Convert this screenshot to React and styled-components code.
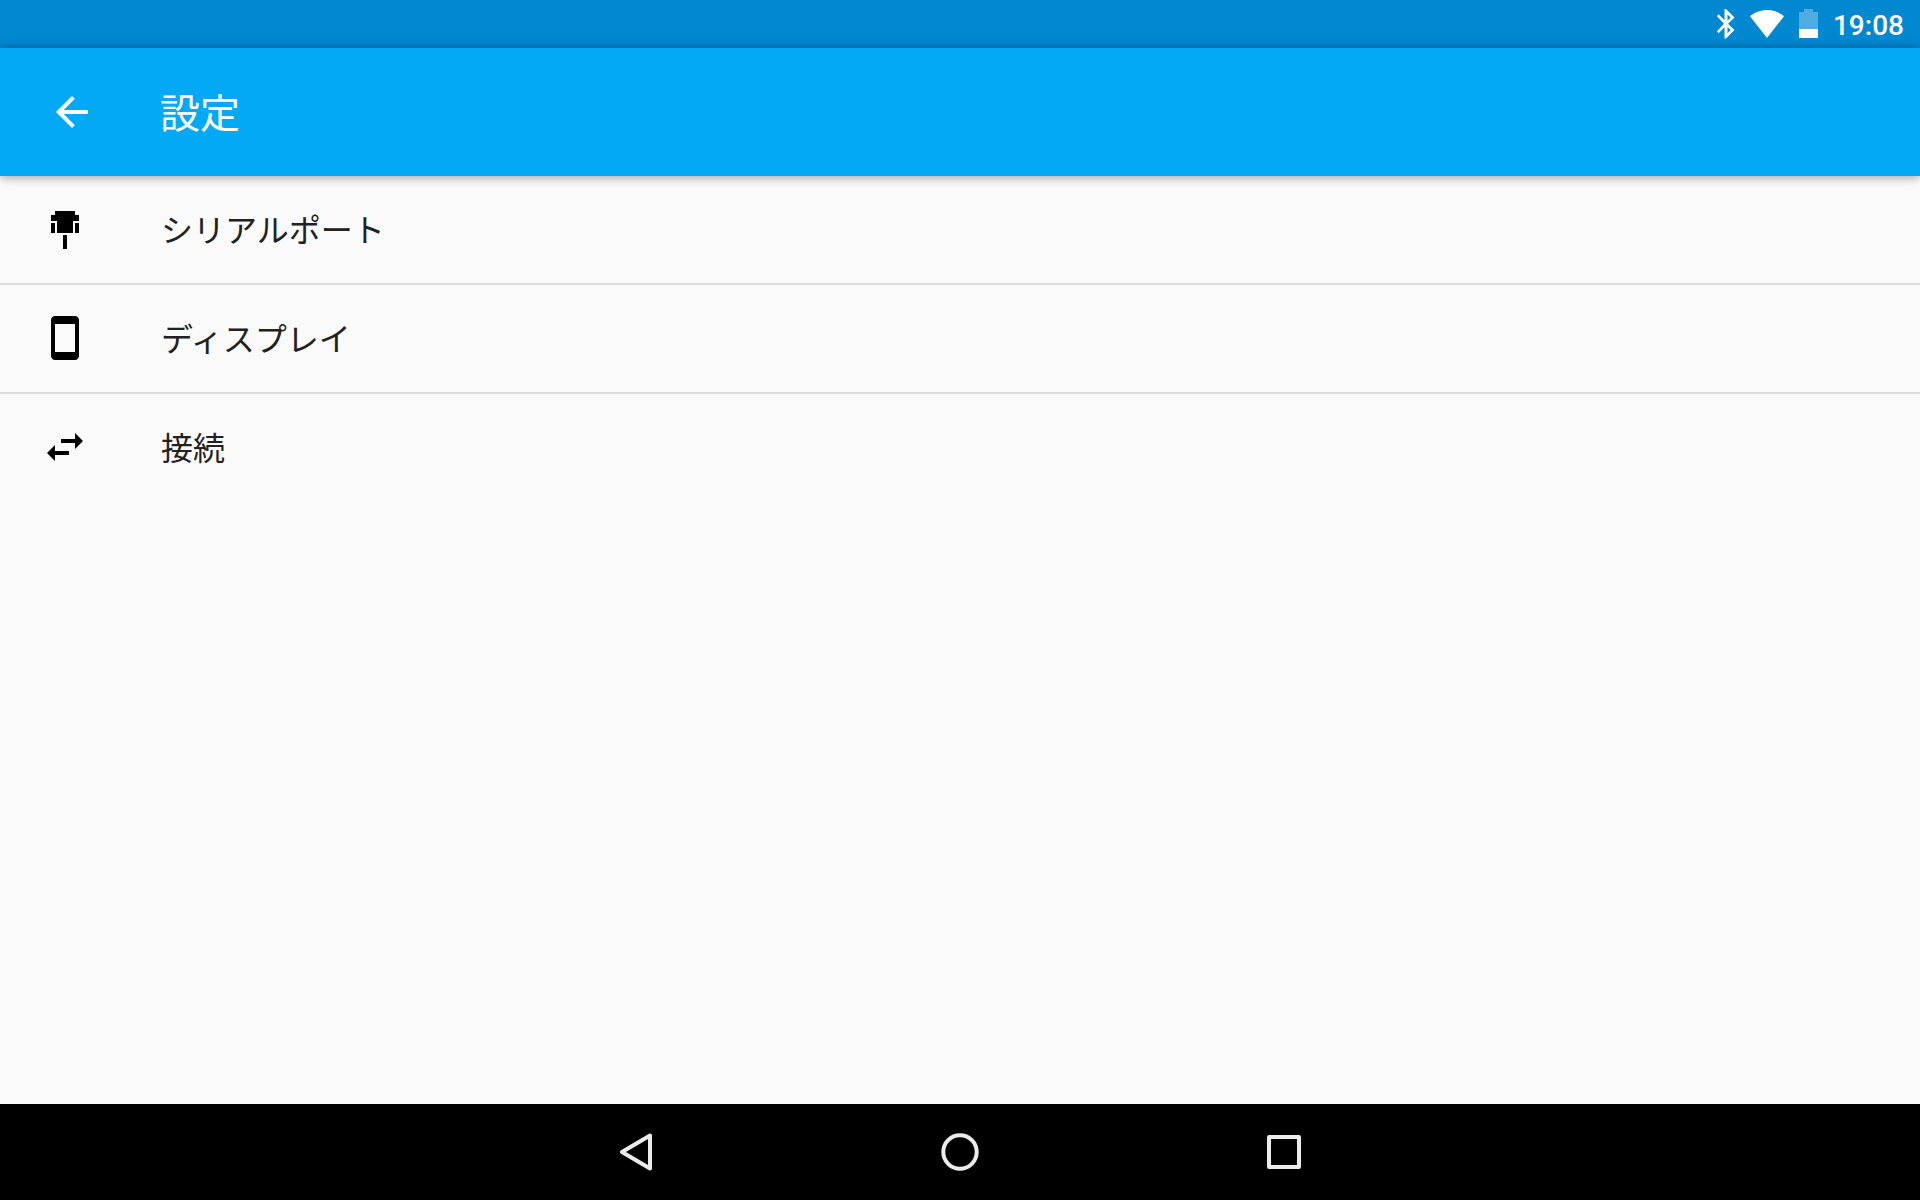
import React from 'react'
import styled, { createGlobalStyle } from 'styled-components'

const GlobalStyle = createGlobalStyle`
  * {
    box-sizing: border-box;
  }
  body {
    margin: 0;
    background-color: #fafafa;
    font-family: Roboto, "Noto Sans CJK JP", sans-serif;
  }
`

const Container = styled.div`
  min-height: 100vh;
  display: flex;
  flex-direction: column;
`

const StatusBar = styled.div`
  height: 48px;
  padding: 0 16px;
  display: flex;
  align-items: center;
  justify-content: flex-end;
  gap: 15px;
  background-color: #0288d1;
  color: white;
`

const Time = styled.time`
  font-size: 28px;
  line-height: 32px;
  font-weight: 500;
  padding-top: 4px;
`

const Header = styled.header`
  position: relative;
  height: 128px;
  padding: 0 48px;
  display: flex;
  align-items: center;
  gap: 64px;
  background-color: #03a9f4;
  color: white;
  box-shadow: 0 1px 10px rgba(0, 0, 0, 0.4);
`

const IconButton = styled.button`
  display: flex;
  padding: 0;
  border: none;
  background: none;
  color: inherit;
  cursor: pointer;
`

const Title = styled.h1`
  margin: 0;
  padding-top: 6px;
  font-size: 40px;
  line-height: 56px;
  font-weight: 400;
`

const Menu = styled.nav`
  flex: 1;
`

const MenuItem = styled.a`
  height: 109px;
  padding: 0 41px 1px;
  display: flex;
  align-items: center;
  gap: 72px;
  border-bottom: 2px solid #dcdcdc;
  color: #212121;
  text-decoration: none;

  &:last-child {
    border-bottom-color: transparent;
  }
`

const Label = styled.span`
  padding-top: 4px;
  font-size: 32px;
  line-height: 48px;
`

const Icon = styled.svg`
  width: 48px;
  height: 48px;
  flex-shrink: 0;
  fill: ${(props) => props.$color || 'currentColor'};
`

const StatusIcon = styled.svg`
  width: ${(props) => props.$width}px;
  height: 30px;
  fill: white;
`

const NavBar = styled.footer`
  height: 96px;
  display: flex;
  justify-content: center;
  background-color: black;
  color: #ececec;
`

const NavButton = styled(IconButton)`
  width: 324px;
  align-items: center;
  justify-content: center;
`

const NavIcon = styled.svg`
  width: 40px;
  height: 40px;
  fill: none;
  stroke: currentColor;
  stroke-width: 4;
  stroke-linejoin: round;
`

const items = [
  {
    id: 'serial',
    label: 'シリアルポート',
    path: 'M7 3h10v2h2v3H5V5h2zM8 8h8v6H8zM5 9h2v5H5zM17 9h2v5h-2zM11 15h2v7h-2z',
  },
  {
    id: 'display',
    label: 'ディスプレイ',
    path: 'M17 1.01L7 1c-1.1 0-1.99.9-1.99 2v18c0 1.1.89 2 1.99 2h10c1.1 0 2-.9 2-2V3c0-1.1-.9-1.99-2-1.99zM17 19H7V5h10v14z',
  },
  {
    id: 'connection',
    label: '接続',
    path: 'M6.99 11L3 15l3.99 4v-3H14v-2H6.99v-3zM21 9l-3.99-4v3H10v2h7.01v3L21 9z',
  },
]

const App = () => {
  return (
    <Container>
      <GlobalStyle />
      <StatusBar>
        <StatusIcon $width={18} viewBox="0 0 18 30" aria-label="Bluetooth">
          <path d="M17.5 8.5L9 0H7.5v11.300L1.500 5.200 0 7.200l7 7.500-7 7.600 1.500 2 6-6.100v11.300H9l8.500-8.500-6.500-6.300zM10.500 5.500l3.200 3-3.200 3.200zM13.700 21l-3.200 3.200v-6.300z" />
        </StatusIcon>
        <StatusIcon $width={34} viewBox="0 0 34 30" aria-label="Wi-Fi">
          <path d="M17 29L34 7.200C33.300 6.600 26.700 1 17 1S.7 6.600 0 7.200z" />
        </StatusIcon>
        <StatusIcon $width={19} viewBox="0 0 19 30" aria-label="Battery">
          <path fillOpacity="0.3" d="M0 3h5V0h9v3h5v17H0z" />
          <path d="M0 20h19v9H0z" />
        </StatusIcon>
        <Time>19:08</Time>
      </StatusBar>
      <Header>
        <IconButton aria-label="戻る">
          <Icon viewBox="0 0 24 24">
            <path d="M20 11H7.830l5.590-5.590L12 4l-8 8 8 8 1.410-1.410L7.830 13H20v-2z" />
          </Icon>
        </IconButton>
        <Title>設定</Title>
      </Header>
      <Menu>
        {items.map((item) => (
          <MenuItem key={item.id} href={`#${item.id}`}>
            <Icon $color="black" viewBox="0 0 24 24">
              <path d={item.path} />
            </Icon>
            <Label>{item.label}</Label>
          </MenuItem>
        ))}
      </Menu>
      <NavBar>
        <NavButton aria-label="Back">
          <NavIcon viewBox="0 0 40 40">
            <path d="M34 3.500v33L6 20z" />
          </NavIcon>
        </NavButton>
        <NavButton aria-label="Home">
          <NavIcon viewBox="0 0 40 40">
            <circle cx="20" cy="20" r="16.700" />
          </NavIcon>
        </NavButton>
        <NavButton aria-label="Recents">
          <NavIcon viewBox="0 0 40 40">
            <rect x="5" y="5" width="30" height="30" />
          </NavIcon>
        </NavButton>
      </NavBar>
    </Container>
  )
}

export default App
